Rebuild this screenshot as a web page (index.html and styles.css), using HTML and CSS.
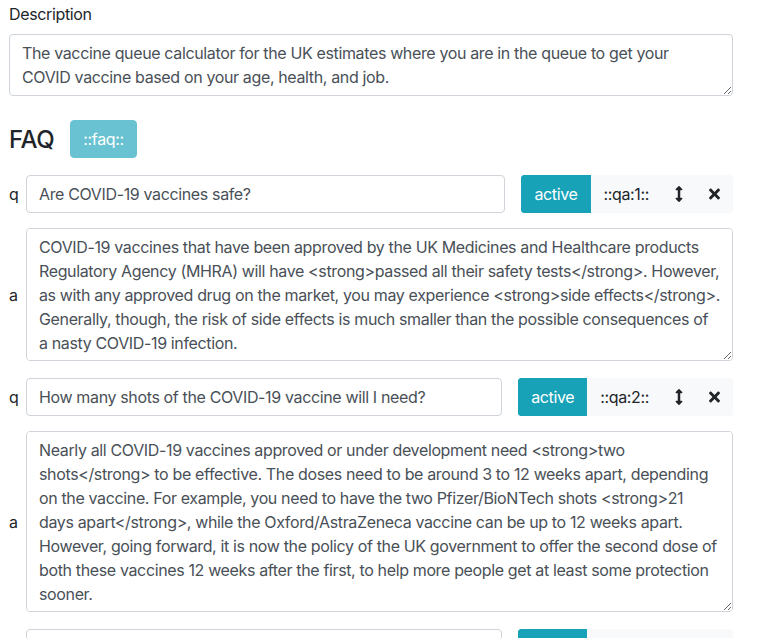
FILE: index.html
```html
<!DOCTYPE html>
<html lang="en">
<head>
<meta charset="utf-8">
<title>FAQ editor</title>
<link rel="stylesheet" href="styles.css">
</head>
<body>
<div class="page">
  <div class="field">
    <label class="field-label" for="desc">Description</label>
    <textarea id="desc" class="control desc">The vaccine queue calculator for the UK estimates where you are in the queue to get your COVID vaccine based on your age, health, and job.</textarea>
  </div>

  <div class="faq-head">
    <h4 class="faq-title">FAQ</h4>
    <button class="btn btn-info-disabled" type="button">::faq::</button>
  </div>

  <div class="qa-row">
    <span class="side-label">q</span>
    <input class="control q-input" type="text" value="Are COVID-19 vaccines safe?">
    <div class="btn-group">
      <button class="btn btn-info" type="button">active</button>
      <button class="btn btn-light" type="button">::qa:1::</button>
      <button class="btn btn-light btn-icon" type="button" aria-label="move">
        <svg class="icon-move" viewBox="0 0 256 512"><path d="M214.059 377.941H168V134.059h46.059c21.382 0 32.090-25.851 16.971-40.971L144.971 7.029c-9.373-9.373-24.568-9.373-33.941 0L24.971 93.088c-15.119 15.119-4.411 40.971 16.971 40.971H88v243.882H41.941c-21.382 0-32.090 25.851-16.971 40.971l86.059 86.059c9.373 9.373 24.568 9.373 33.941 0l86.059-86.059c15.120-15.119 4.412-40.971-16.970-40.971z"/></svg>
      </button>
      <button class="btn btn-light btn-icon" type="button" aria-label="remove">
        <svg class="icon-times" viewBox="0 0 352 512"><path d="M242.72 256l100.070-100.070c12.28-12.28 12.28-32.19 0-44.48l-22.24-22.24c-12.28-12.28-32.19-12.28-44.48 0L176 189.28 75.93 89.21c-12.28-12.28-32.19-12.28-44.48 0L9.21 111.45c-12.28 12.28-12.28 32.19 0 44.48L109.28 256 9.21 356.070c-12.28 12.28-12.28 32.19 0 44.48l22.24 22.24c12.28 12.28 32.2 12.28 44.48 0L176 322.72l100.070 100.070c12.28 12.28 32.2 12.28 44.48 0l22.24-22.24c12.28-12.28 12.28-32.19 0-44.48L242.72 256z"/></svg>
      </button>
    </div>
  </div>
  <div class="a-row">
    <span class="side-label">a</span>
    <textarea class="control answer a1">COVID-19 vaccines that have been approved by the UK Medicines and Healthcare products Regulatory Agency (MHRA) will have &lt;strong&gt;passed all their safety tests&lt;/strong&gt;. However, as with any approved drug on the market, you may experience &lt;strong&gt;side effects&lt;/strong&gt;. Generally, though, the risk of side effects is much smaller than the possible consequences of a nasty COVID-19 infection.</textarea>
  </div>

  <div class="qa-row">
    <span class="side-label">q</span>
    <input class="control q-input" type="text" value="How many shots of the COVID-19 vaccine will I need?">
    <div class="btn-group">
      <button class="btn btn-info" type="button">active</button>
      <button class="btn btn-light" type="button">::qa:2::</button>
      <button class="btn btn-light btn-icon" type="button" aria-label="move">
        <svg class="icon-move" viewBox="0 0 256 512"><path d="M214.059 377.941H168V134.059h46.059c21.382 0 32.090-25.851 16.971-40.971L144.971 7.029c-9.373-9.373-24.568-9.373-33.941 0L24.971 93.088c-15.119 15.119-4.411 40.971 16.971 40.971H88v243.882H41.941c-21.382 0-32.090 25.851-16.971 40.971l86.059 86.059c9.373 9.373 24.568 9.373 33.941 0l86.059-86.059c15.120-15.119 4.412-40.971-16.970-40.971z"/></svg>
      </button>
      <button class="btn btn-light btn-icon" type="button" aria-label="remove">
        <svg class="icon-times" viewBox="0 0 352 512"><path d="M242.72 256l100.070-100.070c12.28-12.28 12.28-32.19 0-44.48l-22.24-22.24c-12.28-12.28-32.19-12.28-44.48 0L176 189.28 75.93 89.21c-12.28-12.28-32.19-12.28-44.48 0L9.21 111.45c-12.28 12.28-12.28 32.19 0 44.48L109.28 256 9.21 356.070c-12.28 12.28-12.28 32.19 0 44.48l22.24 22.24c12.28 12.28 32.2 12.28 44.48 0L176 322.72l100.070 100.070c12.28 12.28 32.2 12.28 44.48 0l22.24-22.24c12.28-12.28 12.28-32.19 0-44.48L242.72 256z"/></svg>
      </button>
    </div>
  </div>
  <div class="a-row">
    <span class="side-label">a</span>
    <textarea class="control answer a2">Nearly all COVID-19 vaccines approved or under development need &lt;strong&gt;two shots&lt;/strong&gt; to be effective. The doses need to be around 3 to 12 weeks apart, depending on the vaccine. For example, you need to have the two Pfizer/BioNTech shots &lt;strong&gt;21 days apart&lt;/strong&gt;, while the Oxford/AstraZeneca vaccine can be up to 12 weeks apart. However, going forward, it is now the policy of the UK government to offer the second dose of both these vaccines 12 weeks after the first, to help more people get at least some protection sooner.</textarea>
  </div>

  <div class="qa-row">
    <span class="side-label">q</span>
    <input class="control q-input" type="text" value="">
    <div class="btn-group">
      <button class="btn btn-info" type="button">active</button>
      <button class="btn btn-light" type="button">::qa:3::</button>
      <button class="btn btn-light btn-icon" type="button" aria-label="move">
        <svg class="icon-move" viewBox="0 0 256 512"><path d="M214.059 377.941H168V134.059h46.059c21.382 0 32.090-25.851 16.971-40.971L144.971 7.029c-9.373-9.373-24.568-9.373-33.941 0L24.971 93.088c-15.119 15.119-4.411 40.971 16.971 40.971H88v243.882H41.941c-21.382 0-32.090 25.851-16.971 40.971l86.059 86.059c9.373 9.373 24.568 9.373 33.941 0l86.059-86.059c15.120-15.119 4.412-40.971-16.970-40.971z"/></svg>
      </button>
      <button class="btn btn-light btn-icon" type="button" aria-label="remove">
        <svg class="icon-times" viewBox="0 0 352 512"><path d="M242.72 256l100.070-100.070c12.28-12.28 12.28-32.19 0-44.48l-22.24-22.24c-12.28-12.28-32.19-12.28-44.48 0L176 189.28 75.93 89.21c-12.28-12.28-32.19-12.28-44.48 0L9.21 111.45c-12.28 12.28-12.28 32.19 0 44.48L109.28 256 9.21 356.070c-12.28 12.28-12.28 32.19 0 44.48l22.24 22.24c12.28 12.28 32.2 12.28 44.48 0L176 322.72l100.070 100.070c12.28 12.28 32.2 12.28 44.48 0l22.24-22.24c12.28-12.28 12.28-32.19 0-44.48L242.72 256z"/></svg>
      </button>
    </div>
  </div>
</div>
</body>
</html>
```
FILE: styles.css
```css
* { box-sizing: border-box; }

html, body {
  margin: 0;
  background: #fff;
}

body {
  font-family: Inter, "Liberation Sans", sans-serif;
  font-size: 16px;
  line-height: 24px;
  letter-spacing: -0.36px;
  color: #212529;
}

.page {
  width: 724px;
  margin-left: 9px;
  padding-top: 2px;
}

.field-label {
  display: block;
  margin-bottom: 8px;
}

.control {
  display: block;
  font: inherit;
  letter-spacing: inherit;
  line-height: 24px;
  color: #495057;
  background: #fff;
  border: 1px solid #ced4da;
  border-radius: 4px;
  padding: 6px 12px;
  margin: 0;
}

textarea.control {
  resize: vertical;
  overflow: auto;
}

.desc {
  width: 100%;
  height: 62px;
}

.faq-head {
  display: flex;
  align-items: center;
  gap: 16px;
  margin-top: 24px;
}

.faq-title {
  margin: 0;
  font-size: 24px;
  font-weight: 500;
  line-height: 29px;
  letter-spacing: -0.4px;
}

.btn {
  font: inherit;
  letter-spacing: inherit;
  line-height: 24px;
  padding: 6px 12px;
  border: 1px solid transparent;
  border-radius: 4px;
  height: 38px;
  margin: 0;
  cursor: pointer;
}

.btn-info-disabled {
  background: #68c2d1;
  border-color: #68c2d1;
  color: #fff;
}

.qa-row {
  display: flex;
  align-items: center;
  margin-top: 17px;
}

.a-row {
  display: flex;
  align-items: center;
  margin-top: 15px;
}

.side-label {
  width: 17px;
  flex: none;
}

.q-input {
  flex: 1;
  height: 38px;
  min-width: 0;
}

.answer {
  flex: 1;
}

.a1 { height: 133px; }
.a2 { height: 181px; }

.btn-group {
  display: flex;
  margin-left: 16px;
  flex: none;
  border-radius: 4px;
  overflow: hidden;
}

.btn-group .btn {
  border-radius: 0;
}

.btn-info {
  background: #17a2b8;
  border-color: #17a2b8;
  color: #fff;
}

.btn-light {
  background: #f8f9fa;
  border-color: #f8f9fa;
  color: #212529;
}

.btn-icon {
  display: flex;
  align-items: center;
  justify-content: center;
}

.icon-move {
  width: 8px;
  height: 16px;
  fill: #212529;
}

.icon-times {
  width: 11px;
  height: 16px;
  fill: #212529;
}
```
